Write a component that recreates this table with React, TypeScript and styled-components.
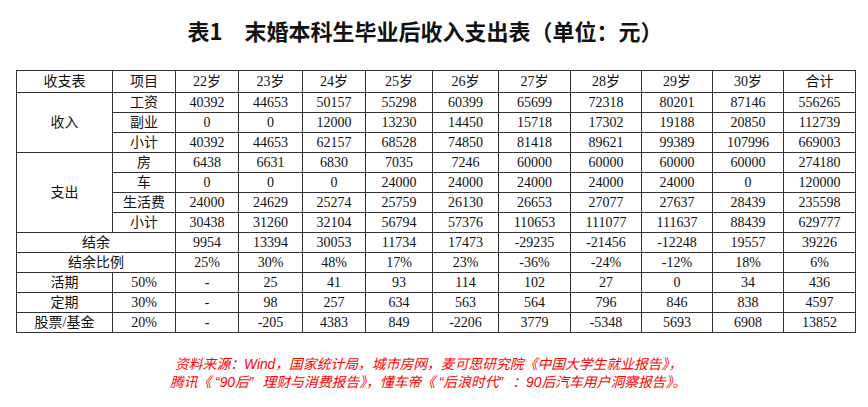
import React from "react";
import styled, {createGlobalStyle} from "styled-components";

const GlobalStyle = createGlobalStyle`
    body {
        margin: 0;
        background: #fff;
    }
`;

const Page = styled.div`
    width: 868px;
    height: 407px;
    overflow: hidden;
    background: #fff;
`;

const Title = styled.h1`
    box-sizing: border-box;
    height: 70px;
    margin: 0;
    padding: 16px 18px 0 0;
    text-align: center;
    font-family: "Noto Sans CJK SC", "Liberation Sans", sans-serif;
    font-size: 22px;
    font-weight: 700;
    line-height: 28px;
    color: #111;
`;

const TitleNo = styled.span`
    margin-right: 22px;
`;

const Table = styled.table`
    margin-left: 16px;
    width: 839px;
    table-layout: fixed;
    border-collapse: collapse;
    font-family: "Liberation Serif", "Noto Sans CJK SC", serif;
    font-size: 14px;
    color: #111;
`;

const Cell = styled.td<{$head?: boolean; $soft?: boolean}>`
    height: ${(p) => (p.$head ? "21px" : "19px")};
    padding: 0;
    text-align: center;
    vertical-align: middle;
    line-height: 18px;
    border: 1px solid #333;
    border-top-color: ${(p) => (p.$soft ? "#777" : "#333")};
    white-space: nowrap;
`;

const Note = styled.div`
    width: 540px;
    margin: 23px 0 0 170px;
    font-family: "Liberation Sans", "Noto Sans CJK SC", sans-serif;
    font-size: 13.8px;
    font-style: italic;
    line-height: 18px;
    color: #ff0000;
    white-space: nowrap;
`;

const Indent = styled.span`
    padding-left: 5px;
`;

const Quote = styled.span<{$close?: boolean}>`
    display: inline-block;
    width: ${(p) => (p.$close ? "1em" : "0.6em")};
    text-align: ${(p) => (p.$close ? "left" : "right")};
`;

const widths = [96, 63, 63, 64, 63, 67, 66, 72, 71, 71, 71, 72];
const ages = ["22岁", "23岁", "24岁", "25岁", "26岁", "27岁", "28岁", "29岁", "30岁"];

const income: [string, string[]][] = [
    ["工资", ["40392", "44653", "50157", "55298", "60399", "65699", "72318", "80201", "87146", "556265"]],
    ["副业", ["0", "0", "12000", "13230", "14450", "15718", "17302", "19188", "20850", "112739"]],
    ["小计", ["40392", "44653", "62157", "68528", "74850", "81418", "89621", "99389", "107996", "669003"]],
];

const spend: [string, string[]][] = [
    ["房", ["6438", "6631", "6830", "7035", "7246", "60000", "60000", "60000", "60000", "274180"]],
    ["车", ["0", "0", "0", "24000", "24000", "24000", "24000", "24000", "0", "120000"]],
    ["生活费", ["24000", "24629", "25274", "25759", "26130", "26653", "27077", "27637", "28439", "235598"]],
    ["小计", ["30438", "31260", "32104", "56794", "57376", "110653", "111077", "111637", "88439", "629777"]],
];

const balance = ["9954", "13394", "30053", "11734", "17473", "-29235", "-21456", "-12248", "19557", "39226"];
const ratio = ["25%", "30%", "48%", "17%", "23%", "-36%", "-24%", "-12%", "18%", "6%"];

const invest: [string, string, string[]][] = [
    ["活期", "50%", ["-", "25", "41", "93", "114", "102", "27", "0", "34", "436"]],
    ["定期", "30%", ["-", "98", "257", "634", "563", "564", "796", "846", "838", "4597"]],
    ["股票/基金", "20%", ["-", "-205", "4383", "849", "-2206", "3779", "-5348", "5693", "6908", "13852"]],
];

const App: React.FC = () => {
    return (
        <Page>
            <GlobalStyle/>
            <Title>
                <TitleNo>表1</TitleNo>末婚本科生毕业后收入支出表（单位：元）
            </Title>
            <Table>
                <colgroup>
                    {widths.map((w, i) => <col key={i} style={{width: w}}/>)}
                </colgroup>
                <tbody>
                <tr>
                    <Cell $head>收支表</Cell>
                    <Cell $head>项目</Cell>
                    {ages.map((a) => <Cell $head key={a}>{a}</Cell>)}
                    <Cell $head>合计</Cell>
                </tr>
                {income.map(([name, vals], i) => (
                    <tr key={"in" + i}>
                        {i === 0 && <Cell $soft rowSpan={3}>收入</Cell>}
                        <Cell $soft={i === 0}>{name}</Cell>
                        {vals.map((v, j) => <Cell $soft={i === 0} key={j}>{v}</Cell>)}
                    </tr>
                ))}
                {spend.map(([name, vals], i) => (
                    <tr key={"out" + i}>
                        {i === 0 && <Cell rowSpan={4}>支出</Cell>}
                        <Cell>{name}</Cell>
                        {vals.map((v, j) => <Cell key={j}>{v}</Cell>)}
                    </tr>
                ))}
                <tr>
                    <Cell $soft colSpan={2}>结余</Cell>
                    {balance.map((v, j) => <Cell $soft key={j}>{v}</Cell>)}
                </tr>
                <tr>
                    <Cell $soft colSpan={2}>结余比例</Cell>
                    {ratio.map((v, j) => <Cell $soft key={j}>{v}</Cell>)}
                </tr>
                {invest.map(([name, pct, vals], i) => (
                    <tr key={"iv" + i}>
                        <Cell $soft={i === 2}>{name}</Cell>
                        <Cell $soft={i === 2}>{pct}</Cell>
                        {vals.map((v, j) => <Cell $soft={i === 2} key={j}>{v}</Cell>)}
                    </tr>
                ))}
                </tbody>
            </Table>
            <Note>
                <Indent>资料来源：Wind，国家统计局，城市房网，麦可思研究院《中国大学生就业报告》，</Indent>
                <br/>
                腾讯《<Quote>“</Quote>90后<Quote $close>”</Quote>理财与消费报告》，懂车帝《<Quote>“</Quote>后浪时代<Quote $close>”</Quote>：90后汽车用户洞察报告》。
            </Note>
        </Page>
    );
};

export default App;
